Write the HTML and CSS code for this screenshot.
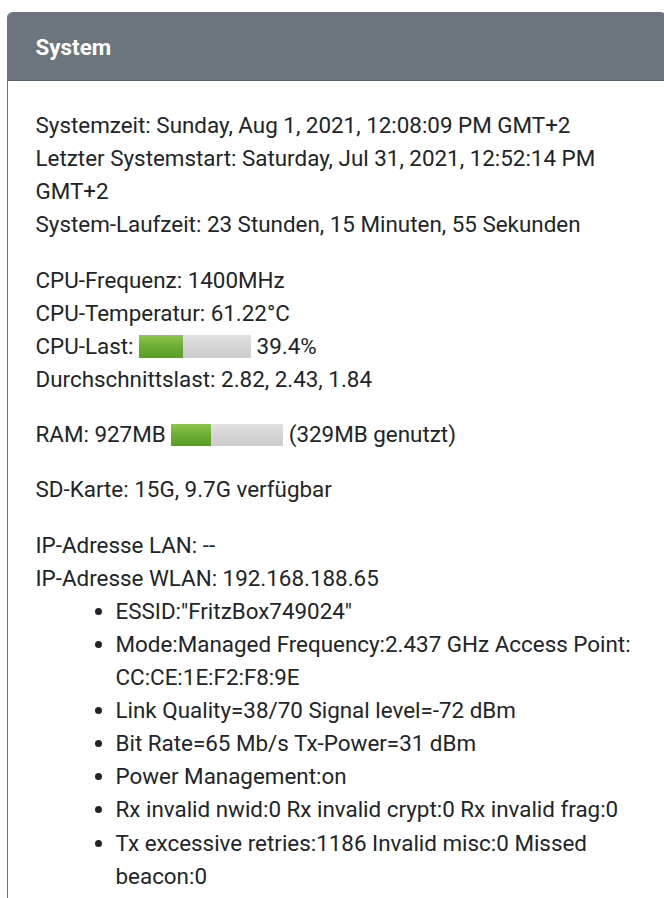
FILE: index.html
```html
<!DOCTYPE html>
<html lang="de">
<head>
<meta charset="utf-8">
<title>System</title>
<link rel="stylesheet" href="styles.css">
</head>
<body>
<div class="card">
  <div class="card-header">System</div>
  <div class="card-body">
    <p>Systemzeit: Sunday, Aug 1, 2021, 12:08:09 PM GMT+2<br>
    Letzter Systemstart: Saturday, Jul 31, 2021, 12:52:14 PM GMT+2<br>
    System-Laufzeit: 23 Stunden, 15 Minuten, 55 Sekunden</p>
    <p>CPU-Frequenz: 1400MHz<br>
    CPU-Temperatur: 61.22°C<br>
    CPU-Last: <span class="bar"><span class="fill" style="width:39.4%"></span></span> 39.4%<br>
    Durchschnittslast: 2.82, 2.43, 1.84</p>
    <p>RAM: 927MB <span class="bar"><span class="fill" style="width:35.5%"></span></span> (329MB genutzt)</p>
    <p>SD-Karte: 15G, 9.7G verfügbar</p>
    <p class="last">IP-Adresse LAN: --<br>
    IP-Adresse WLAN: 192.168.188.65</p>
    <ul>
      <li>ESSID:"FritzBox749024"</li>
      <li>Mode:Managed Frequency:2.437 GHz Access Point: CC:CE:1E:F2:F8:9E</li>
      <li>Link Quality=38/70 Signal level=-72 dBm</li>
      <li>Bit Rate=65 Mb/s Tx-Power=31 dBm</li>
      <li>Power Management:on</li>
      <li>Rx invalid nwid:0 Rx invalid crypt:0 Rx invalid frag:0</li>
      <li>Tx excessive retries:1186 Invalid misc:0 Missed beacon:0</li>
    </ul>
  </div>
</div>
</body>
</html>
```
FILE: styles.css
```css
html, body {
  margin: 0;
  padding: 0;
  background: #fff;
  overflow: hidden;
}
body {
  font-family: Roboto, "Liberation Sans", sans-serif;
  color: #212529;
}
.card {
  margin: 12px 0 0 7px;
  width: 659px;
  border: 1.5px solid #6c757d;
  border-bottom: none;
  border-radius: 5.6px 5.6px 0 0;
  height: 900px;
  box-sizing: border-box;
}
.card-header {
  background: #6c757d;
  color: #fff;
  font-weight: bold;
  font-size: 22.4px;
  height: 67px;
  line-height: 69px;
  padding-left: 27.5px;
  border-bottom: 1.5px solid #5a6168;
  border-radius: 4px 4px 0 0;
}
.card-body {
  padding: 28px 20px 0 27.5px;
  font-size: 22.4px;
  line-height: 33.1px;
}
.card-body p {
  margin: 0 0 22.2px 0;
}
.card-body p.last {
  margin-bottom: 0;
}
.card-body ul {
  margin: 0;
  padding-left: 80px;
}
.bar {
  display: inline-block;
  width: 112px;
  height: 22.4px;
  vertical-align: -4px;
  background: linear-gradient(#e2e2e2, #d3d3d3 60%, #cdcdcd);
  overflow: hidden;
}
.fill {
  display: block;
  height: 100%;
  background: linear-gradient(#8cc64f, #6aab32 55%, #5b9d26);
}
```
